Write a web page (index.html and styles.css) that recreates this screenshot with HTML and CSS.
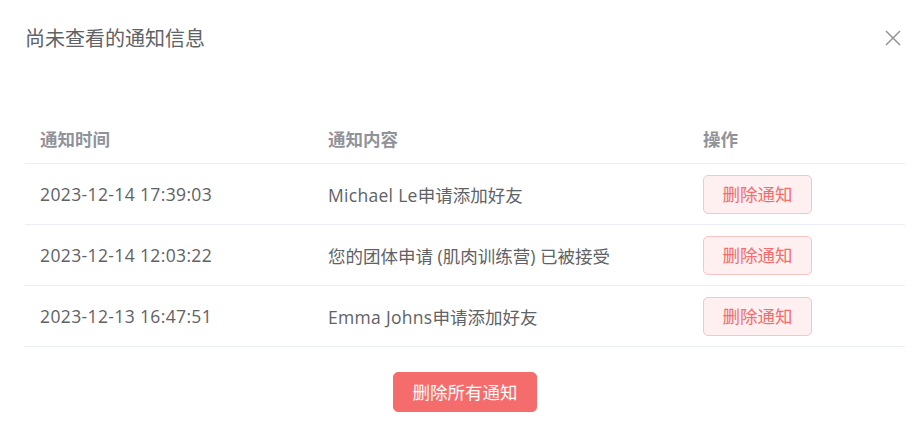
FILE: index.html
```html
<!DOCTYPE html>
<html lang="zh-CN">
<head>
<meta charset="utf-8">
<title>尚未查看的通知信息</title>
<link rel="stylesheet" href="styles.css">
</head>
<body>
<div class="dialog">
  <div class="dialog-header">
    <span class="dialog-title">尚未查看的通知信息</span>
    <button class="dialog-close" aria-label="关闭">
      <svg width="16" height="16" viewBox="0 0 16 16"><path d="M1 1 L15 15 M15 1 L1 15" stroke="#909399" stroke-width="1.5" fill="none"/></svg>
    </button>
  </div>
  <div class="dialog-body">
    <div class="table">
      <div class="row head">
        <div class="cell c1">通知时间</div>
        <div class="cell c2">通知内容</div>
        <div class="cell c3">操作</div>
      </div>
      <div class="row">
        <div class="cell c1 date">2023-12-14 17:39:03</div>
        <div class="cell c2"><span class="latin">Michael Le</span>申请添加好友</div>
        <div class="cell c3"><button class="btn-plain">删除通知</button></div>
      </div>
      <div class="row">
        <div class="cell c1 date">2023-12-14 12:03:22</div>
        <div class="cell c2">您的团体申请 (肌肉训练营) 已被接受</div>
        <div class="cell c3"><button class="btn-plain">删除通知</button></div>
      </div>
      <div class="row">
        <div class="cell c1 date">2023-12-13 16:47:51</div>
        <div class="cell c2"><span class="latin">Emma Johns</span>申请添加好友</div>
        <div class="cell c3"><button class="btn-plain">删除通知</button></div>
      </div>
    </div>
    <div class="footer">
      <button class="btn-danger">删除所有通知</button>
    </div>
  </div>
</div>
</body>
</html>
```
FILE: styles.css
```css
html, body {
  margin: 0;
  padding: 0;
  background: #ffffff;
}
body {
  font-family: "Open Sans", "Noto Sans CJK SC", sans-serif;
  color: #606266;
}
.dialog {
  width: 924px;
  box-sizing: border-box;
  padding: 0 19px 0 25px;
}
.dialog-header {
  display: flex;
  justify-content: space-between;
  align-items: center;
  height: 76px;
}
.dialog-title {
  font-family: "Noto Sans CJK SC", sans-serif;
  font-size: 20px;
  line-height: 30px;
  color: #606266;
}
.dialog-close {
  border: 0;
  background: transparent;
  padding: 0;
  width: 16px;
  height: 16px;
  margin-right: 4px;
  display: flex;
}
.dialog-body {
  padding-top: 37px;
}
.table {
  width: 880px;
  display: flex;
  flex-direction: column;
  font-size: 17.5px;
}
.row {
  display: flex;
  align-items: center;
  border-bottom: 1px solid #ebeef5;
  height: 60px;
}
.row.head {
  height: 50px;
  font-weight: bold;
  color: #909399;
  font-family: "Noto Sans CJK SC", sans-serif;
}
.cell {
  padding-left: 15px;
  box-sizing: border-box;
  white-space: nowrap;
}
.date {
  letter-spacing: 0.37px;
}
.latin {
  letter-spacing: 0.3px;
}
.c1 { width: 288px; }
.c2 { width: 375px; }
.c3 { width: 217px; }
.btn-plain {
  font-family: "Noto Sans CJK SC", sans-serif;
  font-size: 17.5px;
  color: #f56c6c;
  background: #fef0f0;
  border: 1px solid #fbc4c4;
  border-radius: 5px;
  height: 39px;
  width: 109px;
  padding: 0;
  line-height: 1;
}
.footer {
  display: flex;
  justify-content: center;
  width: 880px;
  padding-top: 25px;
}
.btn-danger {
  font-family: "Noto Sans CJK SC", sans-serif;
  font-size: 17.5px;
  color: #ffffff;
  background: #f56c6c;
  border: 1px solid #f56c6c;
  border-radius: 5px;
  height: 40px;
  width: 144px;
  padding: 0;
  line-height: 1;
}
```
